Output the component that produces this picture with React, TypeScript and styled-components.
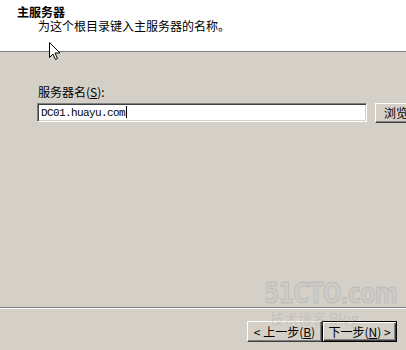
import React from "react";
import styled, { createGlobalStyle } from "styled-components";

const GlobalStyle = createGlobalStyle`
  html, body {
    margin: 0;
    padding: 0;
    background: #d4d0c8;
  }
  body {
    font-family: "Noto Sans CJK SC", "Liberation Sans", sans-serif;
    font-size: 12px;
    color: #000;
  }
`;

const Page = styled.div`
  position: relative;
  width: 406px;
  height: 350px;
  display: flex;
  flex-direction: column;
  overflow: hidden;
  background: #d4d0c8;
`;

const Header = styled.div`
  height: 52px;
  box-sizing: border-box;
  padding: 4px 0 0 17px;
  background: #fff;
  border-bottom: 1px solid #808080;
`;

const Title = styled.div`
  font-weight: bold;
  font-size: 12px;
  line-height: 15px;
`;

const Subtitle = styled.div`
  padding-left: 21px;
  font-size: 12px;
  line-height: 14px;
`;

const Body = styled.div`
  flex: 1;
  padding: 33px 0 0 37px;
  overflow: hidden;
`;

const Label = styled.div`
  padding-left: 1px;
  font-size: 12px;
  line-height: 14px;
  margin-bottom: 4px;

  u {
    text-decoration: underline;
  }
`;

const FieldRow = styled.div`
  display: flex;
  align-items: flex-start;
  gap: 8px;
  width: 420px;
`;

const TextInput = styled.div`
  width: 330px;
  height: 19px;
  box-sizing: border-box;
  background: #fff;
  border-top: 1px solid #808080;
  border-left: 1px solid #808080;
  border-right: 1px solid #fff;
  border-bottom: 1px solid #fff;
  box-shadow: inset 1px 1px 0 #404040, inset -1px -1px 0 #d4d0c8;
  padding: 2px 0 0 3px;
  font-family: "Liberation Mono", monospace;
  font-size: 11px;
  letter-spacing: -0.6px;
  line-height: 14px;
  white-space: nowrap;
`;

const Caret = styled.span`
  display: inline-block;
  width: 1px;
  height: 12px;
  background: #000;
  vertical-align: -2px;
  margin-left: 1px;
`;

const WinButton = styled.button<{ $default?: boolean }>`
  flex-shrink: 0;
  width: 75px;
  height: 21px;
  box-sizing: border-box;
  padding: 0;
  margin: 0;
  background: #d4d0c8;
  font-family: "Noto Sans CJK SC", "Liberation Sans", sans-serif;
  font-size: 12px;
  line-height: 14px;
  color: #000;
  border: 1px solid;
  border-color: ${(p) => (p.$default ? "#000" : "#fff #404040 #404040 #fff")};
  box-shadow: ${(p) =>
    p.$default
      ? "inset 1px 1px 0 #fff, inset -1px -1px 0 #404040, inset -2px -2px 0 #808080"
      : "inset -1px -1px 0 #808080"};
  white-space: nowrap;

  u {
    text-decoration: underline;
  }
`;

const BrowseButton = styled(WinButton)`
  height: 20px;
  text-align: left;
  padding-left: 8px;
`;

const Footer = styled.div`
  border-top: 1px solid #808080;
  box-shadow: inset 0 1px 0 #fff;
  height: 43px;
  box-sizing: border-box;
  padding: 13px 9px 0 0;
  display: flex;
  justify-content: flex-end;
`;

const Watermark = styled.div`
  position: absolute;
  left: 264px;
  top: 279px;
  pointer-events: none;
  line-height: 1;
`;

const WatermarkLogo = styled.div`
  font-family: "DejaVu Sans", sans-serif;
  font-weight: bold;
  font-size: 29px;
  letter-spacing: -1px;
  color: rgba(200, 200, 200, 0.6);
  -webkit-text-stroke: 1px rgba(150, 150, 150, 0.35);
  transform: scaleX(0.76);
  transform-origin: left top;
  white-space: nowrap;
`;

const WatermarkSub = styled.div`
  margin: 3px 0 0 6px;
  font-family: "Noto Sans CJK SC", sans-serif;
  font-size: 14px;
  color: rgba(165, 165, 165, 0.35);
  white-space: nowrap;
`;

const Cursor = styled.svg`
  position: absolute;
  left: 49px;
  top: 42px;
`;

function App() {
  return (
    <Page>
      <GlobalStyle />
      <Header>
        <Title>主服务器</Title>
        <Subtitle>为这个根目录键入主服务器的名称。</Subtitle>
      </Header>
      <Body>
        <Label>
          服务器名(<u>S</u>):
        </Label>
        <FieldRow>
          <TextInput>
            DC01.huayu.com
            <Caret />
          </TextInput>
          <BrowseButton>
            浏览(<u>R</u>)...
          </BrowseButton>
        </FieldRow>
      </Body>
      <Footer>
        <WinButton>
          &lt; 上一步(<u>B</u>)
        </WinButton>
        <WinButton $default>
          下一步(<u>N</u>) &gt;
        </WinButton>
      </Footer>
      <Watermark>
        <WatermarkLogo>51CTO.com</WatermarkLogo>
        <WatermarkSub>技术博客 Blog</WatermarkSub>
      </Watermark>
      <Cursor width="12" height="19" viewBox="0 0 12 19">
        <path
          d="M0.5 0.5 L0.5 15.5 L4 12 L6.5 17.5 L8.5 16.5 L6 11 L11 11 Z"
          fill="#fff"
          stroke="#000"
          strokeWidth="1"
        />
      </Cursor>
    </Page>
  );
}

export default App;
